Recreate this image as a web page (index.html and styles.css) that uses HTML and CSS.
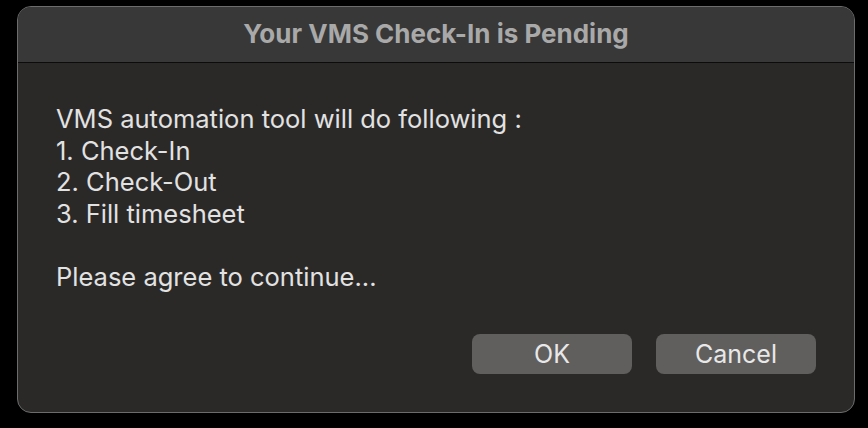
FILE: index.html
```html
<!DOCTYPE html>
<html>
<head>
<meta charset="utf-8">
<link rel="stylesheet" href="styles.css">
</head>
<body>
<div class="window">
  <div class="titlebar">Your VMS Check-In is Pending</div>
  <div class="content">
    <div class="message">
      <div>VMS automation tool will do following :</div>
      <div>1. Check-In</div>
      <div>2. Check-Out</div>
      <div>3. Fill timesheet</div>
      <div class="blank">&nbsp;</div>
      <div>Please agree to continue...</div>
    </div>
    <div class="buttons">
      <button class="btn">OK</button>
      <button class="btn">Cancel</button>
    </div>
  </div>
</div>
</body>
</html>
```
FILE: styles.css
```css
html, body {
  margin: 0;
  padding: 0;
  background: #000;
  width: 868px;
  height: 428px;
  overflow: hidden;
}
body {
  padding-top: 6px;
  padding-left: 17px;
  box-sizing: border-box;
  font-family: Inter, "Liberation Sans", sans-serif;
}
.window {
  width: 838px;
  height: 407px;
  box-sizing: border-box;
  border: 1px solid #6c6c6c;
  border-radius: 14px;
  background: #2a2928;
  overflow: hidden;
  display: flex;
  flex-direction: column;
}
.titlebar {
  height: 56px;
  flex: none;
  background: #383838;
  border-bottom: 1px solid #0c0c0c;
  color: #a9a9a9;
  font-weight: 700;
  font-size: 26px;
  display: flex;
  align-items: center;
  justify-content: center;
  padding-bottom: 3px;
  box-sizing: border-box;
}
.content {
  padding: 40px 38px 0 38px;
  display: flex;
  flex-direction: column;
}
.message {
  color: #e2e2e2;
  font-size: 25.5px;
  line-height: 31.5px;
}
.buttons {
  display: flex;
  justify-content: flex-end;
  gap: 24px;
  margin-top: 42px;
}
.btn {
  width: 160px;
  height: 40px;
  border: none;
  border-radius: 8px;
  background: #605f5e;
  color: #e8e8e8;
  font-family: Inter, "Liberation Sans", sans-serif;
  font-size: 25px;
  padding: 0 0 1px;
}
```
